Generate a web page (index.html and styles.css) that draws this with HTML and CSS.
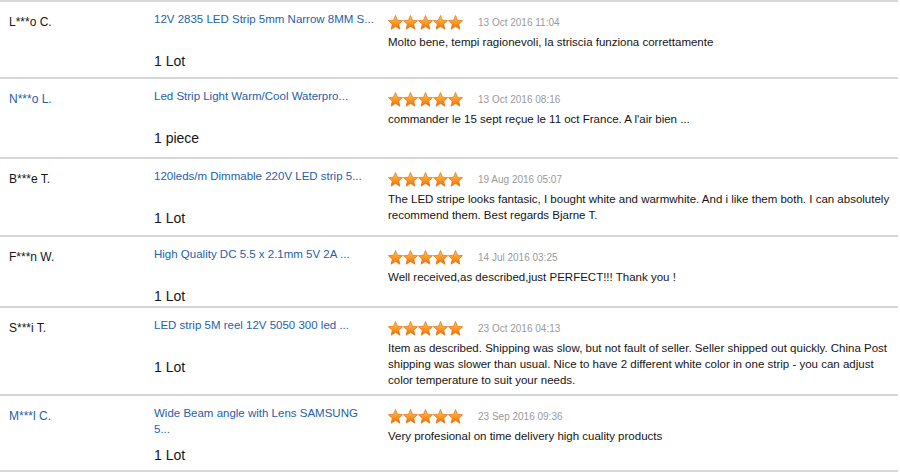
FILE: index.html
```html
<!DOCTYPE html>
<html>
<head>
<meta charset="utf-8">
<link rel="stylesheet" href="styles.css">
</head>
<body>
<svg class="defs" width="0" height="0" aria-hidden="true">
  <defs>
    <linearGradient id="starfill" x1="0" y1="0" x2="0" y2="1">
      <stop offset="0" stop-color="#ffc95e"/>
      <stop offset="0.5" stop-color="#fb9a26"/>
      <stop offset="1" stop-color="#ee6f08"/>
    </linearGradient>
    <symbol id="star" viewBox="0 0 15 15">
      <polygon points="7.5,0.5 9.5,5.25 14.6,5.65 10.73,9.05 11.9,14.2 7.5,11.4 3.1,14.2 4.27,9.05 0.4,5.65 5.5,5.25" fill="url(#starfill)" stroke="#e27010" stroke-width="0.7" stroke-linejoin="round"/>
    </symbol>
  </defs>
</svg>

<div class="list">
  <div class="row">
    <div class="buyer">L***o C.</div>
    <div class="product">
      <a class="title">12V 2835 LED Strip 5mm Narrow 8MM S...</a>
      <div class="qty">1 Lot</div>
    </div>
    <div class="feedback">
      <div class="meta">
        <svg class="stars" width="75" height="15" viewBox="0 0 75 15"><use href="#star" x="0" width="15" height="15"/><use href="#star" x="15" width="15" height="15"/><use href="#star" x="30" width="15" height="15"/><use href="#star" x="45" width="15" height="15"/><use href="#star" x="60" width="15" height="15"/></svg>
        <span class="date">13 Oct 2016 11:04</span>
      </div>
      <p class="text">Molto bene, tempi ragionevoli, la striscia funziona correttamente</p>
    </div>
  </div>

  <div class="row">
    <div class="buyer blue">N***o L.</div>
    <div class="product">
      <a class="title">Led Strip Light Warm/Cool Waterpro...</a>
      <div class="qty">1 piece</div>
    </div>
    <div class="feedback">
      <div class="meta">
        <svg class="stars" width="75" height="15" viewBox="0 0 75 15"><use href="#star" x="0" width="15" height="15"/><use href="#star" x="15" width="15" height="15"/><use href="#star" x="30" width="15" height="15"/><use href="#star" x="45" width="15" height="15"/><use href="#star" x="60" width="15" height="15"/></svg>
        <span class="date">13 Oct 2016 08:16</span>
      </div>
      <p class="text">commander le 15 sept reçue le 11 oct France. A l'air bien ...</p>
    </div>
  </div>

  <div class="row">
    <div class="buyer">B***e T.</div>
    <div class="product">
      <a class="title">120leds/m Dimmable 220V LED strip 5...</a>
      <div class="qty">1 Lot</div>
    </div>
    <div class="feedback">
      <div class="meta">
        <svg class="stars" width="75" height="15" viewBox="0 0 75 15"><use href="#star" x="0" width="15" height="15"/><use href="#star" x="15" width="15" height="15"/><use href="#star" x="30" width="15" height="15"/><use href="#star" x="45" width="15" height="15"/><use href="#star" x="60" width="15" height="15"/></svg>
        <span class="date">19 Aug 2016 05:07</span>
      </div>
      <p class="text">The LED stripe looks fantasic, I bought white and warmwhite. And i like them both. I can absolutely recommend them. Best regards Bjarne T.</p>
    </div>
  </div>

  <div class="row">
    <div class="buyer">F***n W.</div>
    <div class="product">
      <a class="title">High Quality DC 5.5 x 2.1mm 5V 2A ...</a>
      <div class="qty">1 Lot</div>
    </div>
    <div class="feedback">
      <div class="meta">
        <svg class="stars" width="75" height="15" viewBox="0 0 75 15"><use href="#star" x="0" width="15" height="15"/><use href="#star" x="15" width="15" height="15"/><use href="#star" x="30" width="15" height="15"/><use href="#star" x="45" width="15" height="15"/><use href="#star" x="60" width="15" height="15"/></svg>
        <span class="date">14 Jul 2016 03:25</span>
      </div>
      <p class="text">Well received,as described,just PERFECT!!! Thank you !</p>
    </div>
  </div>

  <div class="row">
    <div class="buyer">S***i T.</div>
    <div class="product">
      <a class="title">LED strip 5M reel 12V 5050 300 led ...</a>
      <div class="qty">1 Lot</div>
    </div>
    <div class="feedback">
      <div class="meta">
        <svg class="stars" width="75" height="15" viewBox="0 0 75 15"><use href="#star" x="0" width="15" height="15"/><use href="#star" x="15" width="15" height="15"/><use href="#star" x="30" width="15" height="15"/><use href="#star" x="45" width="15" height="15"/><use href="#star" x="60" width="15" height="15"/></svg>
        <span class="date">23 Oct 2016 04:13</span>
      </div>
      <p class="text">Item as described. Shipping was slow, but not fault of seller. Seller shipped out quickly. China Post shipping was slower than usual. Nice to have 2 different white color in one strip - you can adjust color temperature to suit your needs.</p>
    </div>
  </div>

  <div class="row">
    <div class="buyer blue">M***l C.</div>
    <div class="product">
      <a class="title">Wide Beam angle with Lens SAMSUNG 5...</a>
      <div class="qty">1 Lot</div>
    </div>
    <div class="feedback">
      <div class="meta">
        <svg class="stars" width="75" height="15" viewBox="0 0 75 15"><use href="#star" x="0" width="15" height="15"/><use href="#star" x="15" width="15" height="15"/><use href="#star" x="30" width="15" height="15"/><use href="#star" x="45" width="15" height="15"/><use href="#star" x="60" width="15" height="15"/></svg>
        <span class="date">23 Sep 2016 09:36</span>
      </div>
      <p class="text">Very profesional on time delivery high cuality products</p>
    </div>
  </div>
</div>
</body>
</html>
```

FILE: styles.css
```css
html, body {
  margin: 0;
  padding: 0;
  background: #ffffff;
}

body {
  font-family: "Liberation Sans", Arial, sans-serif;
  color: #151515;
}

.defs {
  display: block;
  width: 0;
  height: 0;
  overflow: hidden;
}

.list {
  width: 898px;
  border-bottom: 2px solid #d6d6d6;
}

.row {
  box-sizing: border-box;
  display: grid;
  grid-template-columns: 145px 234px 1fr;
  align-items: start;
  border-top: 2px solid #d6d6d6;
  padding: 9px 0 0 9px;
}

.row:nth-child(1) { height: 77px; }
.row:nth-child(2) { height: 80px; }
.row:nth-child(3) { height: 78px; }
.row:nth-child(4) { height: 71px; }
.row:nth-child(5) { height: 88px; }
.row:nth-child(6) { height: 76px; }

.buyer {
  margin-top: 3px;
  font-size: 12px;
  line-height: 16px;
  color: #151515;
}

.buyer.blue {
  color: #2561a8;
}

.product {
  padding-right: 14px;
}

.title {
  display: block;
  min-height: 32px;
  font-size: 11.5px;
  line-height: 16px;
  color: #2561a8;
  text-decoration: none;
}

.qty {
  margin-top: 10px;
  font-size: 14px;
  line-height: 16px;
  color: #151515;
}

.feedback {
  margin-top: 4px;
  padding-right: 6px;
}

.meta {
  display: flex;
  align-items: center;
  gap: 15px;
  height: 15px;
}

.stars {
  display: block;
  flex: none;
}

.date {
  font-size: 10px;
  color: #9a9a9a;
}

.text {
  margin: 4px 0 0;
  font-size: 11.5px;
  line-height: 16px;
  color: #151515;
}
```
